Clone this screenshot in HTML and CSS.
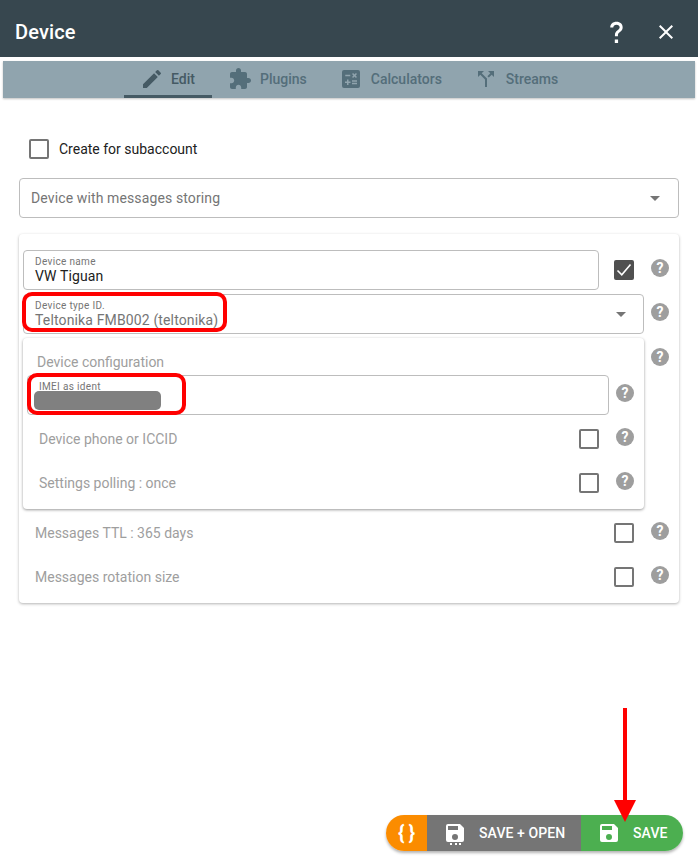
FILE: index.html
```html
<!DOCTYPE html>
<html lang="en">
<head>
<meta charset="utf-8">
<title>Device</title>
<link rel="stylesheet" href="styles.css">
</head>
<body>
<div class="dialog">
  <header class="toolbar">
    <div class="title">Device</div>
    <svg class="tb-icon help" viewBox="0 0 24 24"><path d="M12 3.200c-3 0-5 1.800-5.200 4.600h2.500c.1-1.400 1.100-2.300 2.700-2.300 1.500 0 2.600.9 2.600 2.200 0 1-.5 1.600-1.700 2.500-1.600 1.200-2.200 2.200-2.200 4v.8h2.500v-.7c0-1.100.4-1.700 1.700-2.700 1.500-1.100 2.200-2.200 2.200-3.900 0-2.600-2-4.500-5.100-4.500zM10.600 17.800h2.700v2.800h-2.700z"/></svg>
    <svg class="tb-icon close" viewBox="0 0 24 24"><path d="M19 6.400 17.600 5 12 10.600 6.400 5 5 6.400 10.600 12 5 17.600 6.400 19 12 13.400 17.600 19 19 17.600 13.400 12z"/></svg>
  </header>
  <nav class="tabs">
    <div class="tab active"><svg class="tab-icon" viewBox="0 0 24 24"><path d="M3 17.250V21h3.750L17.810 9.940l-3.750-3.750zM20.710 7.040a1 1 0 0 0 0-1.410l-2.340-2.340a1 1 0 0 0-1.410 0l-1.830 1.830 3.750 3.750z"/></svg><span>Edit</span></div>
    <div class="tab"><svg class="tab-icon" viewBox="0 0 24 24"><path d="M20.500 11H19V7c0-1.100-.9-2-2-2h-4V3.500C13 2.120 11.880 1 10.500 1S8 2.120 8 3.500V5H4c-1.100 0-1.990.9-1.990 2v3.800H3.500c1.490 0 2.700 1.210 2.700 2.700s-1.210 2.700-2.700 2.700H2V20c0 1.100.9 2 2 2h3.800v-1.500c0-1.490 1.210-2.700 2.700-2.700 1.490 0 2.700 1.210 2.700 2.700V22H17c1.100 0 2-.9 2-2v-4h1.500c1.380 0 2.500-1.120 2.500-2.500S21.880 11 20.500 11z"/></svg><span>Plugins</span></div>
    <div class="tab"><svg class="tab-icon" viewBox="0 0 24 24"><path d="M19 3H5a2 2 0 0 0-2 2v14a2 2 0 0 0 2 2h14a2 2 0 0 0 2-2V5a2 2 0 0 0-2-2zM13.030 7.060 14.090 6l1.410 1.410L16.910 6l1.060 1.060-1.410 1.410 1.410 1.410-1.060 1.060-1.410-1.400-1.410 1.410-1.060-1.060 1.410-1.410zM6.250 7.720h5v1.500h-5zM11.500 16h-2v2H8v-2H6v-1.500h2v-2h1.500v2h2zm6.500 1.250h-5v-1.500h5zm0-2.500h-5v-1.500h5z"/></svg><span>Calculators</span></div>
    <div class="tab"><svg class="tab-icon" viewBox="0 0 24 24"><path d="M14 4l2.290 2.290-2.880 2.880 1.420 1.420 2.880-2.880L20 10V4zM10 4H4v6l2.290-2.290 4.710 4.700V20h2v-8.410L7.710 6.290z"/></svg><span>Streams</span></div>
  </nav>
  <main class="content">
    <label class="subaccount"><span class="check"></span><span>Create for subaccount</span></label>
    <div class="field type-select"><span class="select-value">Device with messages storing</span><span class="caret"></span></div>
    <section class="card">
      <div class="row name-row">
        <div class="field name-field"><span class="float-label">Device name</span><span class="float-value">VW Tiguan</span></div>
        <span class="check checked"><svg viewBox="0 0 20 20"><path d="M3.500 10.500 7.800 14.800 16.500 4.500" fill="none" stroke="#fff" stroke-width="1.600"/></svg></span>
        <span class="help-dot">?</span>
      </div>
      <div class="row type-row">
        <div class="field id-field"><span class="float-label">Device type ID.</span><span class="float-value muted">Teltonika FMB002 (teltonika)</span><span class="caret"></span>
          <span class="mark mark-type"></span>
        </div>
        <span class="help-dot">?</span>
      </div>
      <div class="row config-row">
        <div class="subcard">
          <div class="sub-title">Device configuration</div>
          <div class="row imei-row">
            <div class="field imei-field"><span class="float-label">IMEI as ident</span><span class="redact"></span><span class="mark mark-imei"></span></div>
            <span class="help-dot">?</span>
          </div>
          <div class="row option sub-option"><span class="option-label">Device phone or ICCID</span><span class="check"></span><span class="help-dot">?</span></div>
          <div class="row option sub-option"><span class="option-label">Settings polling : once</span><span class="check"></span><span class="help-dot">?</span></div>
        </div>
        <span class="help-dot config-help">?</span>
      </div>
      <div class="outer-options">
        <div class="row option"><span class="option-label">Messages TTL : 365 days</span><span class="check"></span><span class="help-dot">?</span></div>
        <div class="row option"><span class="option-label">Messages rotation size</span><span class="check"></span><span class="help-dot">?</span></div>
      </div>
    </section>
  </main>
  <div class="actions">
    <div class="act act-code">{}</div>
    <div class="act act-open"><svg class="save-icon" viewBox="0 0 24 24"><path d="M17 3H5a2 2 0 0 0-2 2v14a2 2 0 0 0 2 2h14a2 2 0 0 0 2-2V7zm-5 16a3 3 0 1 1 0-6 3 3 0 0 1 0 6zm3-10H5V5h10z"/></svg><span class="dots"></span><span>SAVE + OPEN</span></div>
    <div class="act act-save"><svg class="save-icon" viewBox="0 0 24 24"><path d="M17 3H5a2 2 0 0 0-2 2v14a2 2 0 0 0 2 2h14a2 2 0 0 0 2-2V7zm-5 16a3 3 0 1 1 0-6 3 3 0 0 1 0 6zm3-10H5V5h10z"/></svg><span>SAVE</span></div>
    <svg class="arrow" viewBox="0 0 24 118"><path d="M10 0h4v92h9L12 114 1 92h9z" fill="#f00"/></svg>
  </div>
</div>
</body>
</html>
```
FILE: styles.css
```css
* { box-sizing: border-box; }
html, body { margin: 0; padding: 0; }
body { width: 698px; height: 865px; background: #fff; font-family: Roboto, "Liberation Sans", sans-serif; color: #212121; overflow: hidden; }
.dialog { position: relative; width: 698px; height: 865px; }
.toolbar { height: 57px; background: #37474f; color: #fff; display: flex; align-items: center; padding: 7px 20px 0 15px; }
.title { font-size: 20px; font-weight: 500; flex: 1; letter-spacing: .15px; }
.tb-icon { width: 24px; height: 24px; fill: #fff; }
.help { width: 29px; height: 29px; margin-right: 23px; margin-left: 0; }
.tabs { margin: 4px 3px 0; height: 37px; background: #90a4ae; display: flex; padding-left: 121px; box-shadow: 0 1px 2px rgba(0,0,0,.25); }
.tab { display: flex; align-items: center; gap: 8px; font-size: 14px; font-weight: 500; color: #546e7a; padding: 0 16px; height: 36px; }
.tab.active { color: #455a64; border-bottom: 3px solid #455a64; height: 37px; padding-top: 2px; width: 88px; padding-right: 0; gap: 7px; }
.tab-icon { width: 24px; height: 24px; fill: #546e7a; flex: none; }
.tab.active .tab-icon { fill: #455a64; }
.content { padding: 41px 19px 0; }
.subaccount { display: flex; align-items: center; gap: 10px; padding-left: 10px; height: 20px; font-size: 14px; color: #212121; }
.check { width: 20px; height: 20px; border: 2px solid #757575; border-radius: 2px; flex: none; display: block; }
.check.checked { background: #505050; border-color: #505050; padding: 0; }
.check.checked svg { display: block; width: 20px; height: 20px; margin: -2px; }
.field { position: relative; border: 1px solid #bdbdbd; border-radius: 4px; background: #fff; }
.type-select { height: 40px; margin-top: 19px; width: 660px; display: flex; align-items: center; padding-left: 11px; }
.select-value { font-size: 14px; color: #757575; letter-spacing: .12px; }
.caret { position: absolute; right: 18px; top: 17px; width: 0; height: 0; border-left: 5px solid transparent; border-right: 5px solid transparent; border-top: 5px solid #757575; }
.card { margin-top: 16px; width: 660px; height: 369px; background: #fff; border-radius: 4px; box-shadow: 0 1px 3px rgba(0,0,0,.3); padding: 16px 4px 0; }
.row { display: flex; align-items: center; }
.name-row { height: 40px; }
.name-field { width: 576px; height: 40px; margin-right: 15px; }
.name-row .help-dot { margin-left: 17px; }
.float-label { position: absolute; left: 11px; top: 5px; font-size: 10px; line-height: 12px; color: #757575; letter-spacing: .33px; }
.float-value { position: absolute; left: 11px; top: 17px; font-size: 14px; line-height: 17px; color: #212121; white-space: nowrap; letter-spacing: .14px; }
.float-value.muted { color: #757575; }
.help-dot { width: 18px; height: 18px; border-radius: 50%; background: #9e9e9e; color: #fff; font-size: 14px; font-weight: 700; line-height: 18px; text-align: center; flex: none; display: block; margin-top: -5px; }
.type-row { height: 40px; margin-top: 4px; }
.id-field { width: 621px; height: 40px; margin-right: 7px; }
.id-field .caret { right: 17px; }
.mark { position: absolute; border: 4px solid #f00; border-radius: 10px; }
.mark-type { left: -2px; top: -3px; width: 205px; height: 40px; }
.config-row { align-items: flex-start; margin-top: 4px; }
.subcard { width: 621px; height: 171px; background: #fff; border-radius: 4px; box-shadow: 0 1px 3px rgba(0,0,0,.4); padding: 16px 4px 0; margin-right: 7px; flex: none; }
.config-help { margin-top: 10px; }
.sub-title { font-size: 14px; line-height: 16px; color: #9e9e9e; padding-left: 10px; }
.imei-row { margin-top: 5px; margin-bottom: 2px; height: 40px; }
.imei-field { width: 582px; height: 40px; margin-right: 7px; }
.redact { position: absolute; left: 6px; top: 15px; width: 127px; height: 19px; background: #808080; border-radius: 5px; }
.mark-imei { left: -1px; top: -3px; width: 159px; height: 42px; }
.outer-options { margin-top: 2px; }
.option { height: 44px; padding-left: 12px; }
.option-label { flex: 1; font-size: 14px; color: #9e9e9e; }
.option .check { margin-right: 17px; }
.option .help-dot { margin-right: 6px; margin-top: -4px; }
.actions { position: absolute; left: 386px; top: 815px; width: 297px; height: 36px; display: flex; border-radius: 18px; box-shadow: 0 2px 3px rgba(0,0,0,.3); color: #fff; font-size: 14px; font-weight: 500; }
.act { display: flex; align-items: center; height: 36px; }
.act-code { width: 41px; background: #fb8c00; border-radius: 18px 0 0 18px; justify-content: center; font-size: 20px; font-weight: 700; letter-spacing: 4px; padding-left: 4px; }
.act-open { width: 154px; background: #757575; padding-left: 16px; gap: 12px; position: relative; letter-spacing: .1px; }
.act-save { width: 102px; background: #4caf50; border-radius: 0 18px 18px 0; padding-left: 16px; gap: 12px; letter-spacing: .1px; }
.save-icon { width: 24px; height: 24px; fill: #fff; flex: none; }
.dots { position: absolute; left: 23px; top: 28px; width: 11px; height: 2px; background: repeating-linear-gradient(90deg, #fff 0 2px, transparent 2px 4.500px); }
.arrow { position: absolute; left: 227px; top: -107px; width: 24px; height: 118px; }
```
